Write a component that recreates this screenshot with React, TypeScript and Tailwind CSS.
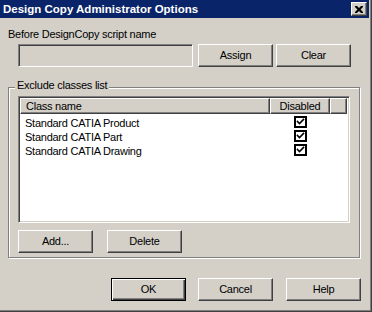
import React from "react";

const raised =
  "border border-t-white border-l-white border-r-[#404040] border-b-[#404040] shadow-[inset_-1px_-1px_0_#808080] bg-[#d4d0c8]";

function Btn({ label, extra = "" }: { label: string; extra?: string }) {
  return (
    <div
      className={`w-[75px] h-[23px] flex items-center justify-center text-[11px] leading-[13px] text-black ${raised} ${extra}`}
    >
      {label}
    </div>
  );
}

function Check() {
  return (
    <svg width="13" height="12" viewBox="0 0 13 12" className="block">
      <rect x="1" y="1" width="11" height="10" fill="#fff" stroke="#000" strokeWidth="2" />
      <path d="M3.5 5.5 L5.5 7.5 L9.5 3.5" fill="none" stroke="#000" strokeWidth="1.6" strokeLinecap="square" />
    </svg>
  );
}

export default function App() {
  const rows = ["Standard CATIA Product", "Standard CATIA Part", "Standard CATIA Drawing"];
  return (
    <div
      className="w-[372px] h-[312px] bg-[#d4d0c8] border-r border-b border-r-[#404040] border-b-[#404040] overflow-hidden"
      style={{ fontFamily: '"Liberation Sans", Arial, sans-serif' }}
    >
      <div className="h-[311px] w-[371px] border-r border-b border-r-[#808080] border-b-[#808080] flex flex-col">
        {/* Title bar */}
        <div className="h-[18px] w-[369px] bg-[#0a246a] flex items-center justify-between pl-[3px] pr-[2px]">
          <span className="text-white font-bold text-[11.5px] leading-[14px]">
            Design Copy Administrator Options
          </span>
          <div className="w-[16px] h-[14px] flex items-center justify-center border border-t-white border-l-white border-r-[#404040] border-b-[#404040] shadow-[inset_-1px_-1px_0_#808080] bg-[#d4d0c8]">
            <svg width="8" height="7" viewBox="0 0 8 7" className="block">
              <path d="M0 0h2l2 2 2-2h2v1l-2.5 2.5L8 6v1H6L4 5 2 7H0V6l2.5-2.5L0 1z" fill="#000" />
            </svg>
          </div>
        </div>

        {/* Content */}
        <div className="pl-[8px] flex flex-col text-[11px] leading-[13px] tracking-[-0.25px] text-black">
          <div className="mt-[10px]">Before DesignCopy script name</div>
          <div className="mt-[3px] flex">
            <div className="ml-[10px] w-[175px] h-[23px] bg-[#d4d0c8] border border-t-[#808080] border-l-[#808080] border-r-white border-b-white shadow-[inset_1px_1px_0_#404040]" />
            <Btn label="Assign" extra="ml-[5px]" />
            <Btn label="Clear" extra="ml-[3px]" />
          </div>

          {/* Group box */}
          <div className="relative mt-[20px] w-[352px] h-[171px] border border-[#808080] shadow-[inset_1px_1px_0_#fff,1px_1px_0_#fff] pl-[9px] pt-[8px]">
            <div className="absolute left-[6px] top-[-9px] px-[2px] bg-[#d4d0c8]">Exclude classes list</div>
            <div className="w-[332px] h-[127px] bg-white border border-t-[#808080] border-l-[#808080] border-r-white border-b-white shadow-[inset_1px_1px_0_#404040,inset_-1px_-1px_0_#d4d0c8] p-[1px] pr-[2px] flex flex-col">
              <div className="flex h-[16px]">
                <div className={`w-[250px] h-[16px] flex items-center pl-[5px] ${raised}`}>Class name</div>
                <div className={`w-[60px] h-[16px] flex items-center justify-center ${raised}`}>Disabled</div>
                <div className={`flex-1 h-[16px] ${raised}`} />
              </div>
              <div className="pt-[2px] flex flex-col">
                {rows.map((r) => (
                  <div key={r} className="flex h-[14px] leading-[14px]">
                    <div className="w-[250px] pl-[5px]">{r}</div>
                    <div className="w-[60px] flex justify-center items-start pl-[1px]">
                      <Check />
                    </div>
                  </div>
                ))}
              </div>
            </div>
            <div className="mt-[7px] flex">
              <Btn label="Add..." />
              <Btn label="Delete" extra="ml-[14px]" />
            </div>
          </div>

          {/* Bottom buttons */}
          <div className="mt-[20px] flex">
            <div className="ml-[103px] w-[75px] h-[23px] flex items-center justify-center border border-black shadow-[inset_1px_1px_0_#fff,inset_-1px_-1px_0_#404040,inset_-2px_-2px_0_#808080] bg-[#d4d0c8]">
              OK
            </div>
            <Btn label="Cancel" extra="ml-[12px]" />
            <Btn label="Help" extra="ml-[13px]" />
          </div>
        </div>
      </div>
    </div>
  );
}
